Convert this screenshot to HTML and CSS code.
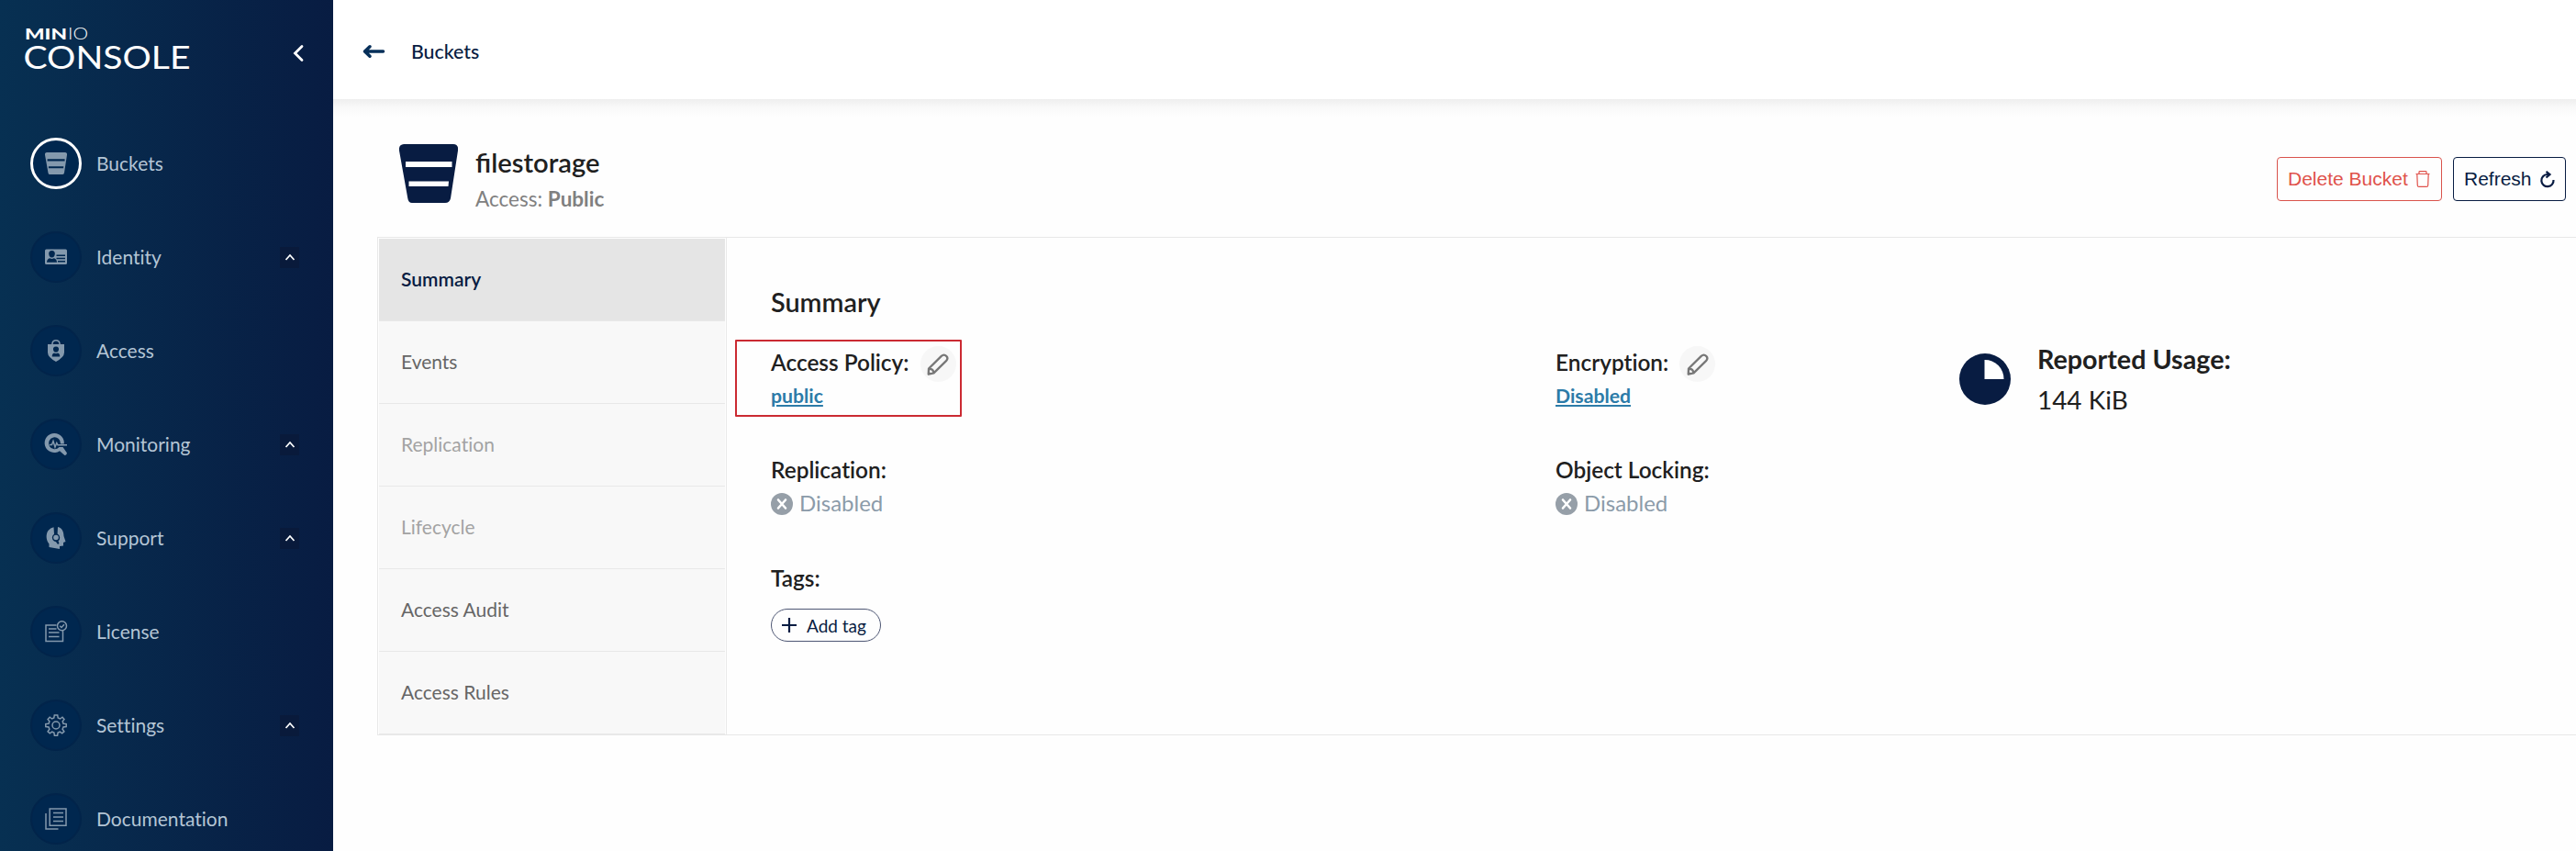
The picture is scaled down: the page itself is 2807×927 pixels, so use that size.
FILE: index.html
```html
<!DOCTYPE html>
<html lang="en">
<head>
<meta charset="utf-8">
<title>MinIO Console</title>
<link rel="stylesheet" href="styles.css">
</head>
<body>
<svg class="defs" width="0" height="0">
  <symbol id="bucket" viewBox="0 0 64 64">
    <path fill-rule="evenodd" d="M5 0H59Q65 .5 64 7L56 59Q55 64 50 64H14Q10 64 9.300 59L0 7Q-.8 .5 5 0ZM7 19V25H57.500V19ZM10.500 40.500V46H53.500L54 40.500Z"/>
  </symbol>
  <symbol id="pencil" viewBox="0 0 24 24">
    <path d="M2 16.500L15.800 2.900C19.500-.4 24.700 4.200 21 8.200L7.500 21.300L1.700 22.600ZM2.500 16.800Q7 16.500 7.300 21" fill="none" stroke="currentColor" stroke-width="2.300" stroke-linejoin="round"/>
    <path d="M1.500 19L5 22.300L1 23.500Z" fill="currentColor"/>
  </symbol>
  <symbol id="off" viewBox="0 0 24 24">
    <circle cx="12" cy="12" r="12"/>
    <path d="M8 7.500L16 16.500M16 7.500L8 16.500" stroke="#fff" stroke-width="2.600" stroke-linecap="round"/>
  </symbol>
</svg>
<div class="app">
  <aside class="sidebar">
    <div class="brand">
      <svg class="logo" viewBox="0 0 184 48" width="184" height="48">
        <text x="0" y="13"><tspan class="logo-min" textLength="46" lengthAdjust="spacingAndGlyphs">MIN</tspan><tspan class="logo-io" x="47" textLength="22" lengthAdjust="spacingAndGlyphs">IO</tspan></text>
        <text class="logo-console" x="-1.500" y="44.500" textLength="182" lengthAdjust="spacingAndGlyphs">CONSOLE</text>
      </svg>
      <svg class="collapse" viewBox="0 0 12 18" width="12" height="18"><path d="M10 1.500L2.500 9L10 16.500"/></svg>
    </div>
    <nav class="menu">
      <a class="item active"><span class="disc"><svg viewBox="0 0 64 64"><use href="#bucket"/></svg></span>Buckets</a>
      <a class="item"><span class="disc"><svg viewBox="0 0 24 24"><path fill-rule="evenodd" d="M1.500 3.500H22.500Q24 3.500 24 5V18.500Q24 20 22.500 20H1.500Q0 20 0 18.500V5Q0 3.500 1.500 3.500ZM7.500 5C4.800 5 4 6.800 4.200 8.800C4.400 11 5.500 12.500 7.500 12.500S10.600 11 10.800 8.800C11 6.800 10.200 5 7.500 5ZM2 17.800H13C13 15 11.500 13.800 9.800 13.300Q7.500 14.800 5.200 13.300C3.500 13.800 2 15 2 17.800ZM12.500 9.500V11H22V9.500ZM12.500 12.700V14.200H22V12.700ZM14 16V17.500H22V16Z"/></svg></span><span class="label">Identity</span><span class="toggle"><svg viewBox="0 0 12 8"><path d="M1.500 7L6 2L10.500 7"/></svg></span></a>
      <a class="item"><span class="disc"><svg viewBox="0 0 24 24"><path d="M8 5.500V4Q8.500 .8 12 .8T16 4V5.500" class="line"/><path fill-rule="evenodd" d="M3 5H21V14Q21 19 12 24Q3 19 3 14ZM12 7.500C9.500 7.500 8.800 9 9 10.800C9.200 12.500 10.300 13.800 12 13.800S14.800 12.500 15 10.800C15.200 9 14.500 7.500 12 7.500ZM7.800 18.500H16.200C16.500 16 15.300 15 14 14.500Q12 15.600 10 14.500C8.700 15 7.500 16 7.800 18.500Z"/></svg></span>Access</a>
      <a class="item"><span class="disc"><svg viewBox="0 0 24 24"><path fill-rule="evenodd" d="M10.500 0A10.500 10.500 0 0 1 20.800 11.500H17A6.500 6.500 0 1 0 15.500 15H19.500L24 21.500Q23.500 24 21.500 24L16 19.200A10.500 10.500 0 1 1 10.500 0Z"/><path d="M5 12.500H7.500L9 8.500L11 15L12.800 10.500L14 12.800H24" class="line"/></svg></span><span class="label">Monitoring</span><span class="toggle"><svg viewBox="0 0 12 8"><path d="M1.500 7L6 2L10.500 7"/></svg></span></a>
      <a class="item"><span class="disc"><svg viewBox="0 0 24 24"><path fill-rule="evenodd" d="M9.500 0.200L10 7.700A4.600 4.600 0 0 0 10 15.500L12 16.200L14 19L15.500 18L14.500 15.300A4.600 4.600 0 0 0 13.600 7.600L14 0C18.500 1 20.500 5 20.500 10L22.500 16L20 17V20.500L16 21V24L4.500 22V18.500C1 14 .8 8 3.500 4Q6 .8 9.500 .2Z"/><circle cx="12" cy="11.500" r="2.800"/></svg></span><span class="label">Support</span><span class="toggle"><svg viewBox="0 0 12 8"><path d="M1.500 7L6 2L10.500 7"/></svg></span></a>
      <a class="item"><span class="disc"><svg viewBox="0 0 24 24"><g class="line"><path d="M12.500 5H1V22.500H19.500V11"/><circle cx="18.500" cy="5.700" r="5"/><path d="M16.200 5.800L18 7.500L21 4.300M4 9H12.500M4 13H15.500M4 17.500H15.500"/></g></svg></span>License</a>
      <a class="item"><span class="disc"><svg viewBox="0 0 24 24"><g class="line"><path d="M10.300 1H13.700L14.200 4L16.500 5L19 3.200L21 5.500L19.200 7.800L20 10.200L23.200 10.600V13.500L20 14L19.100 16.300L20.900 18.800L18.700 20.900L16.300 19.200L14.100 20.100L13.600 23.200H10.400L9.900 20.100L7.700 19.200L5.300 20.900L3.100 18.800L4.900 16.300L4 14L.8 13.500V10.600L4 10.200L4.900 7.800L3.100 5.500L5.200 3.200L7.600 5L9.800 4Z"/><circle cx="12" cy="12" r="4"/></g></svg></span><span class="label">Settings</span><span class="toggle"><svg viewBox="0 0 12 8"><path d="M1.500 7L6 2L10.500 7"/></svg></span></a>
      <a class="item"><span class="disc"><svg viewBox="0 0 24 24"><g class="line"><path d="M5.200 1H23V19.200H5.200ZM1 6V23H14.500M9 5.500H20M9 10H20M9 14.500H20"/></g></svg></span>Documentation</a>
    </nav>
  </aside>

  <main class="main">
    <header class="topbar">
      <svg class="back" viewBox="0 0 24 14" width="24" height="14"><path d="M22.500 7H3M8 1.800L2.500 7L8 12.200"/></svg>
      <span>Buckets</span>
    </header>
    <section class="title">
      <svg class="title-icon" viewBox="0 0 64 64"><use href="#bucket"/></svg>
      <div class="title-text">
        <h1>filestorage</h1>
        <p>Access: <b>Public</b></p>
      </div>
      <div class="actions">
        <button class="btn danger">Delete Bucket <svg viewBox="0 0 16 18" width="16" height="18"><path d="M.5 3.500H15.500M4 3V1.200Q4 .6 5 .6H11Q12 .6 12 1.200V3M1.800 3.800L2.300 16Q2.400 17.400 3.800 17.400H12.200Q13.600 17.400 13.700 16L14.200 3.800"/></svg></button>
        <button class="btn refresh">Refresh <svg class="spin" viewBox="0 0 17 18" width="17" height="18"><path d="M11.500 4H8.500A6.600 6.600 0 1 0 15.500 10M7.500 .8L11.500 4L7.500 7.500"/></svg></button>
      </div>
    </section>
    <section class="panel">
      <div class="tabs">
        <a class="tab selected">Summary</a>
        <a class="tab">Events</a>
        <a class="tab disabled">Replication</a>
        <a class="tab disabled">Lifecycle</a>
        <a class="tab">Access Audit</a>
        <a class="tab">Access Rules</a>
      </div>
      <div class="content">
        <h2>Summary</h2>
        <div class="grid">
          <div class="col">
            <div class="highlight"></div>
            <div class="field"><span class="name">Access Policy:</span><span class="edit"><svg viewBox="0 0 24 24"><use href="#pencil"/></svg></span></div>
            <a class="link">public</a>
            <div class="name spaced">Replication:</div>
            <div class="status"><svg viewBox="0 0 24 24"><use href="#off"/></svg><span>Disabled</span></div>
            <div class="name spaced tags">Tags:</div>
            <button class="chip"><svg viewBox="0 0 16 16"><path d="M8 0V16M0 8H16"/></svg>Add tag</button>
          </div>
          <div class="col">
            <div class="field"><span class="name">Encryption:</span><span class="edit"><svg viewBox="0 0 24 24"><use href="#pencil"/></svg></span></div>
            <a class="link">Disabled</a>
            <div class="name spaced">Object Locking:</div>
            <div class="status"><svg viewBox="0 0 24 24"><use href="#off"/></svg><span>Disabled</span></div>
          </div>
          <div class="usage">
            <svg viewBox="0 0 56 56"><circle cx="28" cy="28" r="28"/><path d="M27.500 7A20.500 20.500 0 0 1 48.500 28H27.500Z" fill="#fff"/></svg>
            <div><div class="usage-name">Reported Usage:</div><div class="usage-value">144 KiB</div></div>
          </div>
        </div>
      </div>
    </section>
  </main>
</div>
</body>
</html>
```
FILE: styles.css
```css
* { box-sizing: border-box; }
body { margin: 0; background: #fff; color: #202020; font-family: Lato, sans-serif; font-variant-ligatures: none; overflow: hidden; }
h1, h2, p { margin: 0; }
svg { display: block; flex: none; overflow: visible; }
.defs { position: absolute; }
button { background: none; font: inherit; margin: 0; }
.app { display: flex; width: 2807px; height: 927px; overflow: hidden; }

.sidebar { width: 363px; flex: none; background: linear-gradient(90deg, #073052 0%, #081c42 100%); }
.brand { display: flex; align-items: flex-start; height: 150px; padding: 30px 32px 0 27px; }
.logo text { fill: #fff; }
.logo-min { font: 900 16.700px Lato, sans-serif; }
.logo-io { font: 300 16.700px Lato, sans-serif; }
.logo-console { font: 400 35px Lato, sans-serif; }
.collapse { margin: 19px 0 0 auto; fill: none; stroke: #fff; stroke-width: 2.800px; stroke-linecap: round; }
.menu { display: flex; flex-direction: column; gap: 46px; padding: 0 37px 0 33px; }
.item { display: flex; align-items: center; height: 56px; color: #b4c5d5; font-size: 21px; line-height: 26px; }
.disc { display: flex; align-items: center; justify-content: center; width: 56px; height: 56px; margin-right: 16px; flex: none; border: 2px solid #02244a; border-radius: 50%; background: #00274f; }
.active .disc { border: 3px solid #fff; }
.disc svg { width: 24px; height: 24px; fill: #8499ad; }
.line { fill: none; stroke: #8499ad; stroke-width: 1.500px; }
.toggle { display: flex; align-items: center; justify-content: center; width: 21px; height: 23px; margin-left: auto; background: #091a3b; }
.toggle svg { width: 12px; height: 8px; fill: none; stroke: #fff; stroke-width: 1.700px; }

.main { flex: 1; min-width: 0; background: #fefefe; }
.topbar { display: flex; align-items: center; gap: 29px; height: 108px; padding: 4px 0 0 32px; background: #fff; color: #081c42; font-size: 21.300px; font-weight: 500; line-height: 26px; }
.back { fill: none; stroke: #07305a; stroke-width: 3.600px; stroke-linecap: round; stroke-linejoin: round; }
.title { display: flex; align-items: flex-start; height: 150px; padding: 49px 11px 0 72px; background: linear-gradient(#eeeeee 0, #f8f8f8 8px, #fefefe 20px); }
.title-icon { width: 64px; height: 64px; fill: #081c42; }
.title-text { padding: 2px 0 0 19px; }
.title-text h1 { font-size: 29.200px; font-weight: 600; line-height: 36px; font-variant-ligatures: normal; }
.title-text p { margin-top: 8px; color: #808080; font-size: 22.500px; line-height: 27px; }
.actions { display: flex; gap: 12px; margin: 14px 0 0 auto; }
.btn { display: flex; align-items: center; gap: 8px; width: 180px; height: 48px; padding: 0 11px; border: 1px solid #081c42; border-radius: 4px; color: #081c42; font: 21px "Liberation Sans", Arial, sans-serif; white-space: nowrap; }
.btn.refresh { width: 123px; }
.btn svg { fill: none; stroke: currentColor; stroke-width: 1.200px; }
.btn .spin { stroke-width: 2.200px; }
.btn.danger { border-color: #d9534c; color: #e0524b; }

.panel { display: flex; height: 543px; margin-left: 48px; border: solid #e8e8e8; border-width: 1px 0 1px 1px; background: #fefefe; }
.tabs { width: 380px; flex: none; padding: 1px 1px 0; border-right: 1px solid #eaeaea; }
.tab { display: flex; align-items: center; height: 90px; padding: 0 0 1px 24px; border-bottom: 1px solid #e8e8e8; background: #f8f8f8; color: #666; font-size: 21px; line-height: 26px; }
.tab.selected { background: #e5e5e5; color: #081c42; font-weight: 600; }
.tab.disabled { color: #a3a3a3; }
.content { flex: 1; min-width: 0; padding: 53px 0 0 48px; }
h2 { margin-bottom: 27px; font-size: 28.800px; font-weight: 600; line-height: 35px; }
.grid { display: grid; grid-template-columns: 855px 440px auto; align-items: start; }
.col { position: relative; padding-top: 3px; }
.highlight { position: absolute; left: -39px; top: -4px; width: 247px; height: 84px; border: 2px solid #cb2a32; border-radius: 1px; }
.field { display: flex; align-items: center; height: 39px; }
.name { font-size: 24.400px; font-weight: 600; line-height: 29px; }
.field .name { margin-bottom: 5px; }
.edit { display: flex; align-items: center; justify-content: center; width: 39px; height: 39px; margin-left: 12px; border-radius: 50%; background: #f7f7f7; color: #777; }
.edit svg { width: 24px; height: 24px; }
.link { display: block; margin-top: 2px; color: #2c7ba8; font-size: 21.200px; font-weight: 700; line-height: 26px; text-decoration: underline; text-decoration-thickness: 2px; text-underline-offset: 2px; }
.spaced { margin-top: 53px; }
.spaced.tags { margin-top: 54px; }
.status { display: flex; align-items: center; gap: 7px; height: 24px; margin-top: 11px; color: #8b9ba9; font-size: 24px; line-height: 22px; }
.status span { padding-bottom: 2px; }
.status svg { width: 24px; height: 24px; fill: #969fa8; }
.chip { display: flex; align-items: center; gap: 11px; width: 120px; height: 36px; margin-top: 19px; padding: 0 0 0 11px; border: 1px solid #4d5673; border-radius: 18px; color: #081c42; font-size: 19px; white-space: nowrap; }
.chip svg { width: 16px; height: 16px; stroke: #081c42; stroke-width: 2.200px; }
.usage { display: flex; align-items: center; gap: 29px; }
.usage > svg { width: 56px; height: 56px; fill: #081c42; }
.usage-name { font-size: 28.700px; font-weight: 700; line-height: 35px; white-space: nowrap; }
.usage-value { margin-top: 9px; font-size: 27.900px; line-height: 34px; }
```
